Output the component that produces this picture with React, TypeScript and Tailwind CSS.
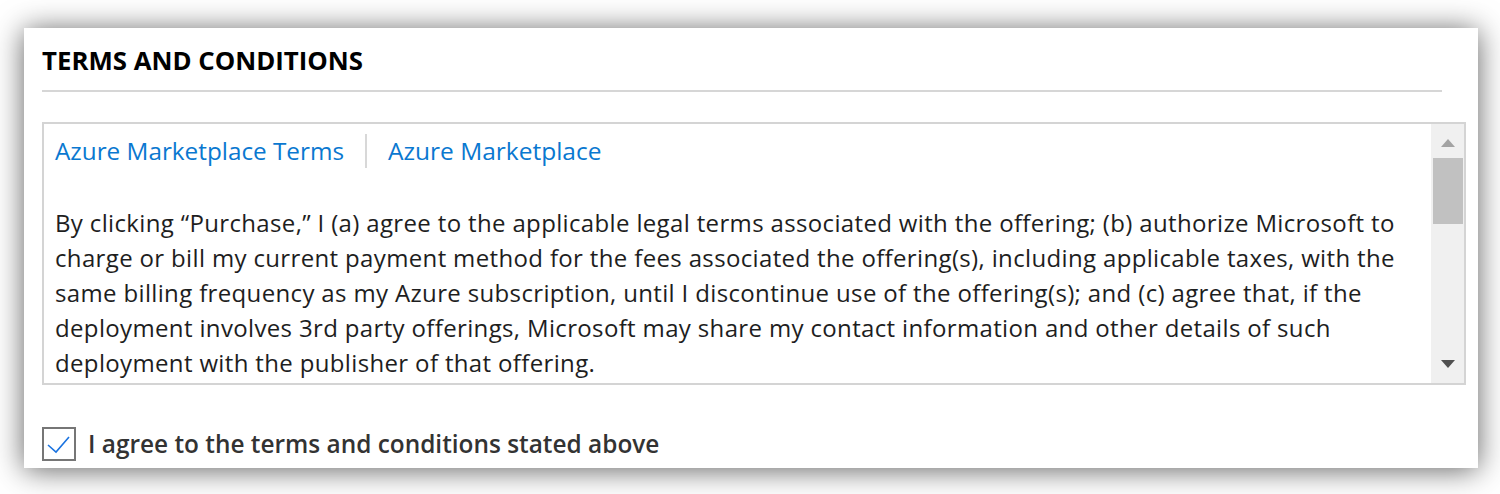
import React from 'react';

const bodyLines = [
  'By clicking “Purchase,” I (a) agree to the applicable legal terms associated with the offering; (b) authorize Microsoft to',
  'charge or bill my current payment method for the fees associated the offering(s), including applicable taxes, with the',
  'same billing frequency as my Azure subscription, until I discontinue use of the offering(s); and (c) agree that, if the',
  'deployment involves 3rd party offerings, Microsoft may share my contact information and other details of such',
  'deployment with the publisher of that offering.',
];

const App: React.FC = () => {
  return (
    <div className="w-[1500px] h-[494px] bg-white overflow-hidden font-['Open_Sans',sans-serif]">
      <div className="ml-[24px] mt-[28px] w-[1454px] h-[440px] bg-white shadow-[0_2px_28px_rgba(0,0,0,0.62)] pl-[18px] pr-[12px] overflow-hidden">
        <div className="h-[62px] flex items-center pt-[3px]">
          <h2 className="text-[25.8px] font-bold text-black">TERMS AND CONDITIONS</h2>
        </div>
        <div className="h-[2px] bg-[#d6d6d6] mr-[24px]"></div>

        <div className="mt-[30px] h-[263px] border-2 border-[#d4d4d4] flex overflow-hidden">
          <div className="flex-1 pl-[11px] overflow-hidden">
            <div className="mt-[10px] h-[34px] flex items-center">
              <a className="text-[24.3px] text-[#0a78d0] leading-none">Azure Marketplace Terms</a>
              <div className="w-[2px] h-[34px] bg-[#d8d8d8] mx-[21px]"></div>
              <a className="text-[24.5px] text-[#0a78d0] leading-none">Azure Marketplace</a>
            </div>
            <div className="mt-[37px] text-[24px] tracking-[0.35px] leading-[35px] text-[#1e1e1e] whitespace-nowrap">
              {bodyLines.map((l, i) => (
                <div key={i}>{l}</div>
              ))}
            </div>
          </div>
          <div className="w-[33px] bg-[#f0f0f0] flex flex-col items-center">
            <svg width="14" height="8" viewBox="0 0 14 8" className="mt-[15px]">
              <polygon points="0,8 7,0 14,8" fill="#a3a3a3" />
            </svg>
            <div className="mt-[11px] w-[30px] h-[66px] bg-[#c1c1c1] ml-[1px]"></div>
            <div className="flex-1"></div>
            <svg width="14" height="8" viewBox="0 0 14 8" className="mb-[15px]">
              <polygon points="0,0 14,0 7,8" fill="#505050" />
            </svg>
          </div>
        </div>

        <label className="mt-[41px] flex items-center gap-[12px]">
          <span className="w-[34px] h-[34px] border-2 border-[#767676] flex items-center justify-center shrink-0">
            <svg width="30" height="30" viewBox="0 0 30 30">
              <polyline points="4,16 12,23 25,8" fill="none" stroke="#1a73e0" strokeWidth="1.6" />
            </svg>
          </span>
          <span className="text-[24.4px] font-semibold text-[#333333]">I agree to the terms and conditions stated above</span>
        </label>
      </div>
    </div>
  );
};

export default App;
